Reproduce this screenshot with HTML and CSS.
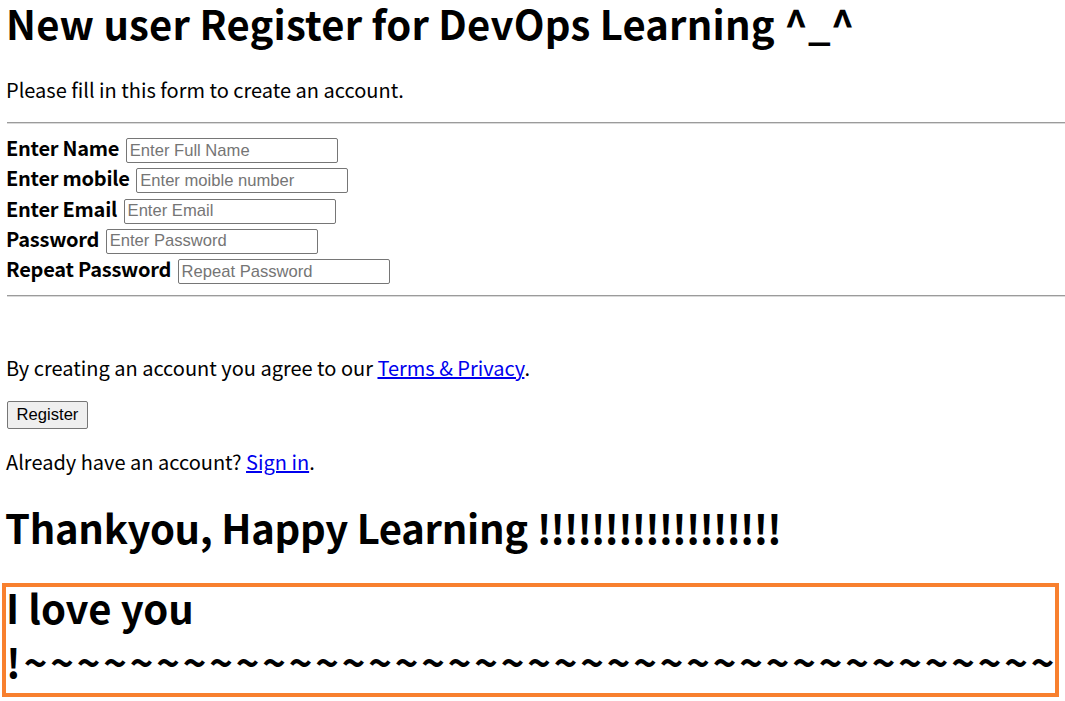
FILE: index.html
```html
<!DOCTYPE html>
<html lang="en">
<head>
<meta charset="utf-8">
<title>DevOps Learning Register</title>
<link rel="stylesheet" href="styles.css">
</head>
<body>
<form class="register">
  <h1 class="title">New user Register for DevOps Learning ^_^</h1>
  <p class="intro">Please fill in this form to create an account.</p>
  <hr class="rule rule-top">
  <div class="fields">
    <div class="row"><label class="lbl" for="name">Enter Name</label><input class="field" id="name" type="text" placeholder="Enter Full Name"></div>
    <div class="row"><label class="lbl" for="mobile">Enter mobile</label><input class="field" id="mobile" type="text" placeholder="Enter moible number"></div>
    <div class="row"><label class="lbl" for="email">Enter Email</label><input class="field" id="email" type="text" placeholder="Enter Email"></div>
    <div class="row"><label class="lbl" for="psw">Password</label><input class="field" id="psw" type="password" placeholder="Enter Password"></div>
    <div class="row"><label class="lbl" for="psw-repeat">Repeat Password</label><input class="field" id="psw-repeat" type="password" placeholder="Repeat Password"></div>
  </div>
  <hr class="rule rule-bottom">
  <p class="agree">By creating an account you agree to our <a class="link" href="#">Terms &amp; Privacy</a>.</p>
  <button class="btn" type="button">Register</button>
  <p class="signin">Already have an account? <a class="link" href="#">Sign in</a>.</p>
  <h1 class="thanks"><span class="thanks-words">Thankyou, Happy Learning </span><span class="bangs">!!!!!!!!!!!!!!!!!!</span></h1>
  <div class="love-box">
    <h1 class="love">I love you <span class="tildes">!~~~~~~~~~~~~~~~~~~~~~~~~~~~~~~~~~~~~~~~</span></h1>
  </div>
</form>
</body>
</html>
```
FILE: styles.css
```css
html, body {
  margin: 0;
  padding: 0;
  background: #ffffff;
}

body {
  font-family: "Noto Sans CJK KR", "Noto Sans", sans-serif;
  color: #000000;
  font-size: 20px;
  line-height: 24px;
}

.register {
  display: flex;
  flex-direction: column;
  align-items: stretch;
}

.intro,
.fields,
.agree,
.signin {
  margin-left: 6px;
}

.title {
  margin: 3px 0 0 6px;
  font-size: 40px;
  line-height: 40px;
  font-weight: 700;
  letter-spacing: 0.2px;
}

.intro {
  margin-top: 35.3px;
  margin-bottom: 0;
}

.rule {
  height: 0;
  margin: 0 0 0 7px;
  border: 0;
  border-top: 1px solid #9b9b9b;
  border-bottom: 1px solid #dadada;
}

.rule-top {
  margin-top: 19.7px;
}

.rule-bottom {
  margin-top: 8.4px;
}

.fields {
  margin-top: 11.4px;
  display: flex;
  flex-direction: column;
}

.row {
  height: 30.25px;
  display: flex;
  align-items: center;
  gap: 6.5px;
}

.lbl {
  font-weight: 700;
  letter-spacing: -0.25px;
  padding-bottom: 5px;
}

.field {
  box-sizing: border-box;
  width: 212px;
  height: 25px;
  margin: 0;
  padding: 0 3px;
  border: 1px solid #767676;
  border-radius: 2px;
  font-family: "Liberation Sans", Arial, sans-serif;
  font-size: 16.6px;
  color: #000000;
  background: #ffffff;
}

.field::placeholder {
  color: #757575;
}

.agree {
  margin-top: 59.3px;
  margin-bottom: 0;
}

.link {
  color: #0000ee;
  text-decoration: underline;
}

.btn {
  align-self: flex-start;
  box-sizing: border-box;
  margin: 20.7px 0 0 7px;
  width: 81px;
  height: 28px;
  padding: 0;
  border: 1px solid #767676;
  border-radius: 2px;
  background: #efefef;
  font-family: "Liberation Sans", Arial, sans-serif;
  font-size: 16.6px;
  color: #000000;
}

.signin {
  margin-top: 21.3px;
  margin-bottom: 0;
}

.thanks {
  margin: 33.2px 0 0 5px;
  font-size: 40px;
  line-height: 40px;
  font-weight: 700;
}

.thanks-words {
  letter-spacing: -0.3px;
}

.bangs {
  letter-spacing: -1.25px;
}

.love-box {
  margin: 35.5px 6px 0 2px;
  border: 4px solid #f8802e;
}

.love {
  margin: -6.6px 0 4.4px 0;
  font-size: 40px;
  line-height: 54px;
  font-weight: 700;
}

.tildes {
  letter-spacing: 2.9px;
}
```
